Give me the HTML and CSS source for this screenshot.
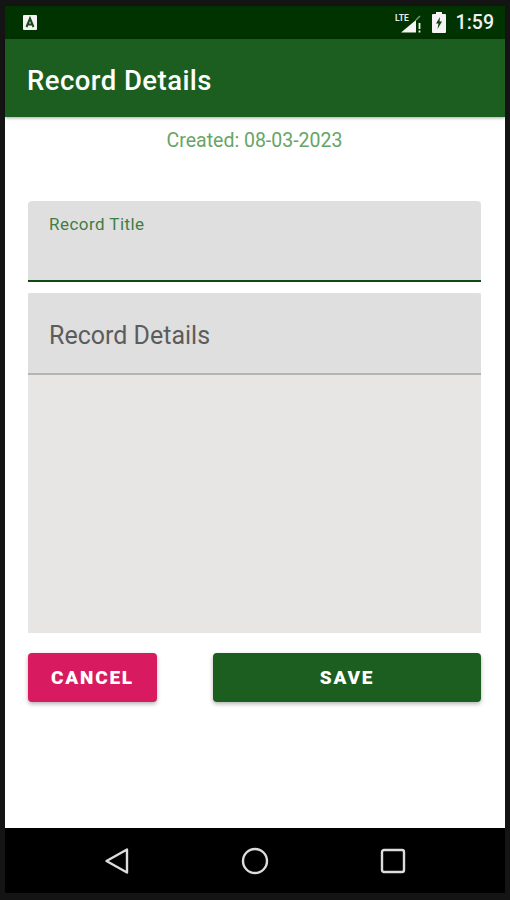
FILE: index.html
```html
<!DOCTYPE html>
<html lang="en">
<head>
  <meta charset="UTF-8">
  <title>Record Details</title>
  <link rel="stylesheet" href="styles.css">
</head>
<body>
  <div class="phone">
    <div class="status-bar">
      <span class="notif-icon">
        <svg width="14" height="15" viewBox="0 0 14 15">
          <rect x="0" y="0" width="14" height="15" rx="1" fill="#f4f4f4"/>
          <path d="M3.5 12 L7 3.5 L10.5 12 M5 9.5 H9" fill="none" stroke="#1d4a1d" stroke-width="2"/>
        </svg>
      </span>
      <span class="status-right">
        <svg class="signal" width="28" height="20" viewBox="0 0 28 20">
          <text x="0" y="8" class="lte">LTE</text>
          <path d="M6 19.500 L21 7 V19.500 Z" fill="#f4f4f4"/>
          <path d="M21 7 L25 3" stroke="#7d9a7d" stroke-width="1.500"/>
          <path d="M24.500 10 V16 M24.500 17.500 V19.500" stroke="#f0f0f0" stroke-width="1.800"/>
        </svg>
        <svg class="battery" width="14" height="21" viewBox="0 0 14 21">
          <path d="M4 0 H10 V2 H13 Q14 2 14 3 V20 Q14 21 13 21 H1 Q0 21 0 20 V3 Q0 2 1 2 H4 Z" fill="#f4f4f4"/>
          <path d="M8 5 L4 11.500 H6.500 L5.500 17 L10 9.500 H7.500 Z" fill="#143c14"/>
        </svg>
        <span class="clock">1:59</span>
      </span>
    </div>

    <header class="app-bar">Record Details</header>

    <main class="content">
      <p class="created">Created: 08-03-2023</p>

      <div class="field field-title">
        <label class="float-label">Record Title</label>
      </div>

      <div class="details">
        <div class="field field-details">Record Details</div>
      </div>

      <div class="actions">
        <button class="btn btn-cancel">CANCEL</button>
        <button class="btn btn-save">SAVE</button>
      </div>
    </main>

    <nav class="nav-bar">
      <svg width="28" height="28" viewBox="0 0 28 28">
        <path d="M3.500 14 L24 2.500 V25.500 Z" fill="none" stroke="#dcdcdc" stroke-width="2.400" stroke-linejoin="round"/>
      </svg>
      <svg width="28" height="28" viewBox="0 0 28 28">
        <circle cx="14" cy="14" r="12" fill="none" stroke="#dcdcdc" stroke-width="2.400"/>
      </svg>
      <svg width="28" height="28" viewBox="0 0 28 28">
        <rect x="3" y="3" width="22" height="22" rx="2" fill="none" stroke="#dcdcdc" stroke-width="2.400"/>
      </svg>
    </nav>
  </div>
</body>
</html>
```

FILE: styles.css
```css
html, body {
  margin: 0;
  padding: 0;
  background: #141414;
}

body {
  width: 510px;
  height: 900px;
  overflow: hidden;
  font-family: Roboto, "Liberation Sans", sans-serif;
}

.phone {
  display: flex;
  flex-direction: column;
  height: 887px;
  margin: 6px 5px 7px 5px;
  background: #fff;
}

.status-bar {
  display: flex;
  align-items: center;
  justify-content: space-between;
  height: 33px;
  padding: 0 11px 0 18px;
  background: #013301;
  color: #f0f0f0;
}

.notif-icon {
  display: flex;
}

.status-right {
  display: flex;
  align-items: center;
}

.signal {
  margin-right: 9px;
}

.lte {
  font-size: 8.500px;
  font-weight: 700;
  fill: #e8e8e8;
}

.battery {
  margin-right: 10px;
}

.clock {
  font-size: 19.500px;
  font-weight: 500;
}

.app-bar {
  display: flex;
  align-items: center;
  box-sizing: border-box;
  height: 78px;
  padding: 4px 0 0 22px;
  background: #1b5e20;
  color: #fff;
  font-size: 27.500px;
  font-weight: 500;
  letter-spacing: .45px;
  box-shadow: 0 1px 3px rgba(0, 0, 0, .35);
}

.content {
  display: flex;
  flex: 1;
  flex-direction: column;
  padding: 0 24px 0 23px;
}

.created {
  margin: 12px 0 49px;
  color: #66a566;
  font-size: 19.500px;
  line-height: 23px;
  text-align: center;
}

.field {
  box-sizing: border-box;
  background: #dfdfdf;
  border-radius: 4px 4px 0 0;
}

.field-title {
  height: 81px;
  margin-bottom: 11px;
  padding: 13px 21px 0;
  border-bottom: 2px solid #0f4a14;
}

.float-label {
  display: block;
  color: #3f7d45;
  font-size: 17px;
  letter-spacing: .45px;
  line-height: 20px;
}

.details {
  height: 340px;
  background: #e7e6e4;
  margin-bottom: 20px;
}

.field-details {
  height: 82px;
  padding: 28px 21px 0;
  border-bottom: 2px solid #b4b4b4;
  color: #5c5c5c;
  font-size: 25px;
  line-height: 30px;
}

.actions {
  display: flex;
  justify-content: space-between;
}

.btn {
  height: 49px;
  padding: 0;
  border: 0;
  border-radius: 4px;
  color: #fff;
  font-family: inherit;
  font-size: 19px;
  font-weight: 900;
  letter-spacing: 1.800px;
  box-shadow: 0 2px 4px rgba(0, 0, 0, .3);
}

.btn-cancel {
  width: 129px;
  background: #d81b60;
}

.btn-save {
  width: 268px;
  background: #1b5e20;
}

.nav-bar {
  display: flex;
  align-items: center;
  justify-content: center;
  gap: 110px;
  height: 65px;
  background: #000;
}
```
